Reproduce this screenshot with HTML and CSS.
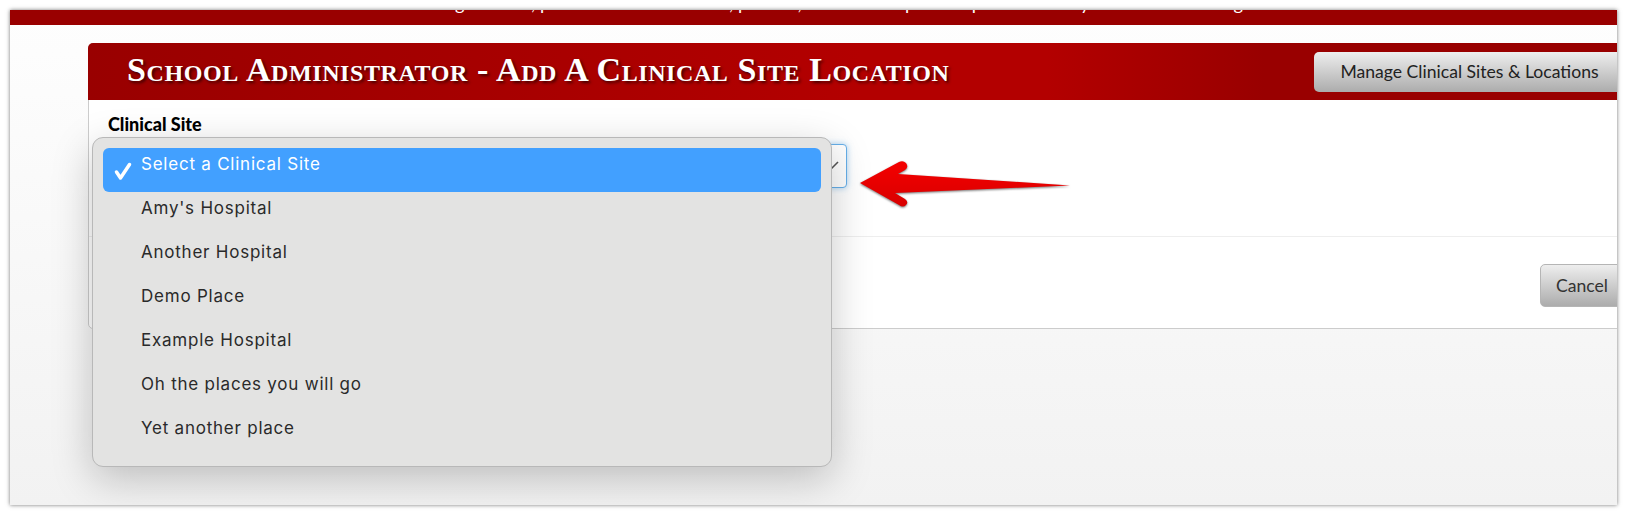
FILE: index.html
```html
<!DOCTYPE html>
<html lang="en">
<head>
    <meta charset="UTF-8">
    <meta name="viewport" content="width=device-width, initial-scale=1.0">
    <title>School Administrator - Add A Clinical Site Location</title>
    <link rel="stylesheet" href="styles.css">
</head>
<body>
    <div class="window">
        <div class="notice">
            <p>agreement, please review the terms, policies, and the complete requirements of your clinical learning</p>
        </div>
        <main class="content">
            <section class="card">
                <header class="card-header">
                    <h1>School Administrator - Add A Clinical Site Location</h1>
                    <button class="btn btn-header">Manage Clinical Sites &amp; Locations</button>
                </header>
                <div class="card-body">
                    <label class="field-label">Clinical Site</label>
                    <div class="select-box">
                        <svg class="chevron" width="12" height="12" viewBox="0 0 12 12" fill="none" stroke="#555" stroke-width="1.6"><path d="M2 10 10 2"/></svg>
                    </div>
                </div>
                <div class="card-footer">
                    <button class="btn btn-cancel">Cancel</button>
                </div>
            </section>
        </main>

        <ul class="site-menu">
            <li class="selected">
                <svg class="check" width="20" height="20" viewBox="0 0 20 20" fill="none" stroke="#fff" stroke-width="3.5" stroke-linecap="round" stroke-linejoin="round"><path d="M3.5 11 7.5 17 16.5 3.5"/></svg>
                Select a Clinical Site
            </li>
            <li>Amy's Hospital</li>
            <li>Another Hospital</li>
            <li>Demo Place</li>
            <li>Example Hospital</li>
            <li>Oh the places you will go</li>
            <li>Yet another place</li>
        </ul>

        <svg class="arrow" width="230" height="65" viewBox="0 0 230 65">
            <defs>
                <linearGradient id="arrowFill" x1="0" y1="0" x2="0" y2="1">
                    <stop offset="0" stop-color="#f50000"/>
                    <stop offset="1" stop-color="#d80000"/>
                </linearGradient>
            </defs>
            <path fill="url(#arrowFill)" d="M10 33 49 12Q53 10 56 13 59 17 55 20L48 24 220 35.5 45 43 55 49Q59 52 56 55 53 58 49 55Z"/>
        </svg>
    </div>
</body>
</html>
```

FILE: styles.css
```css
body {
    margin: 0;
    background: #fff;
    font-family: 'Lato', sans-serif;
}
.window {
    position: relative;
    margin: 10px;
    height: 495px;
    overflow: hidden;
    background: linear-gradient(to bottom, #fefefe, #f2f2f2);
    box-shadow: 0 0 4px rgba(0, 0, 0, 0.55);
}
.notice {
    height: 15px;
    padding-left: 62px;
    background-color: #990000;
    overflow: hidden;
    color: #fff;
    font-size: 18.2px;
    text-align: center;
}
.notice p {
    margin: -17px 0 0;
    line-height: 20px;
    white-space: nowrap;
}
.content {
    padding: 18px 0 0 78px;
}
.card {
    width: 1547px;
    background-color: #fff;
    border: 1px solid #ccc;
    border-radius: 5px;
    box-sizing: border-box;
}
.card-header {
    display: flex;
    align-items: center;
    justify-content: space-between;
    height: 57px;
    margin: -1px -1px 0;
    padding: 0 10px 0 39px;
    border-radius: 5px 5px 0 0;
    background: linear-gradient(to right, #990000 0%, #b30000 50%, #b30000 62%, #990000 76%);
}
h1 {
    margin: -4px 0 0;
    color: #fff;
    font-family: 'Liberation Serif', serif;
    font-size: 34px;
    font-weight: bold;
    font-variant: small-caps;
    letter-spacing: 0.58px;
    white-space: nowrap;
    text-shadow: 2px 2px 3px rgba(0, 0, 0, 0.6);
}
.btn {
    border: 1px solid #b5b5b5;
    border-radius: 5px;
    background: linear-gradient(to bottom, #eeeeee, #acacac);
    color: #222;
    font-family: 'Lato', sans-serif;
    font-size: 17.6px;
}
.btn-header {
    width: 311px;
    height: 40px;
    border: none;
}
.card-body {
    height: 137px;
    padding: 14px 0 0 19px;
    box-sizing: border-box;
    border-bottom: 1px solid #eee;
}
.field-label {
    display: block;
    color: #000;
    font-size: 18px;
    font-weight: 900;
    line-height: 20px;
    margin-bottom: 10px;
}
.select-box {
    display: flex;
    align-items: center;
    justify-content: flex-end;
    width: 739px;
    height: 44px;
    padding-right: 6px;
    box-sizing: border-box;
    background-color: #fff;
    border: 1px solid #66afe9;
    border-radius: 4px;
    box-shadow: 0 0 6px rgba(102, 175, 233, 0.6);
}
.card-footer {
    display: flex;
    justify-content: flex-end;
    height: 91px;
    padding: 27px 10px 0 0;
    box-sizing: border-box;
}
.btn-cancel {
    width: 84px;
    height: 43px;
    color: #333;
}
.site-menu {
    position: absolute;
    left: 82px;
    top: 127px;
    width: 740px;
    height: 330px;
    margin: 0;
    padding: 10px 10px;
    box-sizing: border-box;
    list-style: none;
    background-color: #e3e3e2;
    border: 1px solid #b8b8b8;
    border-radius: 11px;
    box-shadow: 0 12px 40px rgba(0, 0, 0, 0.22);
    font-family: 'Inter', sans-serif;
    font-size: 17px;
    letter-spacing: 0.77px;
    color: #2a2a2a;
}
.site-menu li {
    position: relative;
    height: 44px;
    padding-left: 38px;
    line-height: 33px;
    border-radius: 6px;
}
.site-menu li.selected {
    background-color: #42a0ff;
    color: #fff;
}
.check {
    position: absolute;
    left: 10px;
    top: 13px;
}
.arrow {
    position: absolute;
    left: 840px;
    top: 140px;
    filter: drop-shadow(0 1px 1px rgba(0, 0, 0, 0.55));
}
```
